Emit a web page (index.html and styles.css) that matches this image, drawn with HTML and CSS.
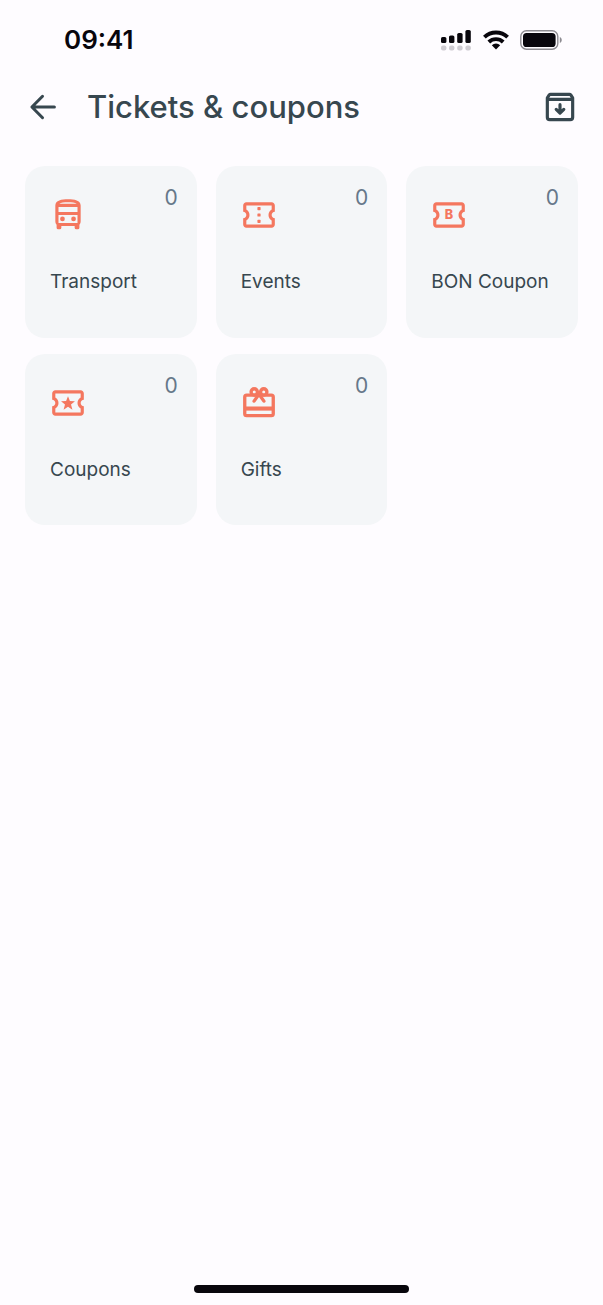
FILE: index.html
```html
<!DOCTYPE html>
<html lang="en">
<head>
<meta charset="utf-8">
<meta name="viewport" content="width=device-width, initial-scale=1">
<title>Tickets &amp; coupons</title>
<link rel="stylesheet" href="styles.css">
</head>
<body>
<svg class="defs" aria-hidden="true">
  <symbol id="ticket" viewBox="0 0 24 24"><path fill="currentColor" d="M22 10V6c0-1.11-.9-2-2-2H4c-1.1 0-1.99.89-1.99 2v4c1.1 0 1.99.9 1.99 2s-.89 2-2 2v4c0 1.1.9 2 2 2h16c1.1 0 2-.9 2-2v-4c-1.1 0-2-.9-2-2s.9-2 2-2zm-2-1.46c-1.19.69-2 1.99-2 3.46s.81 2.77 2 3.46V18H4v-2.54c1.19-.69 2-1.99 2-3.46 0-1.48-.8-2.77-1.99-3.46L4 6h16v2.54z"/></symbol>
</svg>
<div class="screen">
  <div class="status">
    <span class="time">09:41</span>
    <div class="indicators">
      <svg width="32" height="22" viewBox="0 0 32 22" aria-label="Signal">
        <g fill="#08060c"><rect x="1" y="8" width="5.400" height="6" rx="1.600"/><rect x="9" y="6.500" width="5.400" height="7.500" rx="1.600"/><rect x="17.200" y="4" width="5.400" height="10" rx="1.600"/><rect x="25.400" y="1" width="5.400" height="13" rx="1.600"/></g>
        <g fill="#cfccd2"><rect x="1" y="16.400" width="5.400" height="5" rx="2"/><rect x="9" y="16.400" width="5.400" height="5" rx="2"/><rect x="17.200" y="16.400" width="5.400" height="5" rx="2"/><rect x="25.400" y="16.400" width="5.400" height="5" rx="2"/></g>
      </svg>
      <svg width="26" height="20" viewBox="0 0 26 20" aria-label="Wi-Fi">
        <path fill="none" stroke="#08060c" stroke-width="3.900" d="M1.400 7.200a16.600 16.600 0 0 1 23.200 0M5.800 12a10.400 10.400 0 0 1 14.400 0"/>
        <path fill="#08060c" d="M13 19.500l-4.200-4.200a6 6 0 0 1 8.400 0z"/>
      </svg>
      <svg width="42" height="20" viewBox="0 0 42 20" aria-label="Battery">
        <rect x=".8" y=".8" width="37" height="18.400" rx="5.600" fill="none" stroke="#8d8b91" stroke-width="1.400"/>
        <rect x="3" y="3" width="32.600" height="14" rx="3.600" fill="#08060c"/>
        <path d="M39.800 7c2.600 1 2.600 5 0 6z" fill="#8d8b91"/>
      </svg>
    </div>
  </div>
  <header class="bar">
    <button class="icon-button" aria-label="Back">
      <svg width="38" height="38" viewBox="0 0 24 24"><path fill="none" stroke="currentColor" stroke-width="1.900" stroke-linecap="round" stroke-linejoin="round" d="M19.200 12H5.200M11.700 5.200L5 12l6.700 6.800"/></svg>
    </button>
    <h1 class="title">Tickets &amp; coupons</h1>
    <button class="icon-button" aria-label="Archive">
      <svg width="38" height="38" viewBox="0 0 24 24" fill="none" stroke="currentColor" stroke-width="2" stroke-linecap="round" stroke-linejoin="round"><path d="M4 6.200L5.200 4.400Q5.500 4 6 4h12q.5 0 .8.400L20 6.200V18.500a1.500 1.500 0 0 1-1.500 1.500h-13A1.500 1.500 0 0 1 4 18.500zM4.500 7.200h15"/><path d="M12 10.500v5.200M9.600 13.500L12 15.900l2.400-2.400"/></svg>
    </button>
  </header>
  <main class="grid">
    <a class="card" href="#transport">
      <div class="top">
        <svg class="icon" viewBox="0 0 24 24"><path fill="currentColor" fill-rule="evenodd" d="M12 2C8 2 4 2.600 4 6v10c0 .9.300 1.600.8 2.200V20a1 1 0 0 0 1 1h1a1 1 0 0 0 1-1v-1h8.400v1a1 1 0 0 0 1 1h1a1 1 0 0 0 1-1v-1.800c.5-.6.800-1.300.8-2.200V6c0-3.400-4-4-8-4zM6.500 4.900C7.500 4.200 9.500 4 12 4s4.500.2 5.500.9zM6 6.900h12v3.200H6zM6 12h12v5H6z"/><circle cx="8.500" cy="14.500" r="1.500" fill="currentColor"/><circle cx="15.500" cy="14.500" r="1.500" fill="currentColor"/></svg>
        <span class="count">0</span>
      </div>
      <span class="label">Transport</span>
    </a>
    <a class="card" href="#events">
      <div class="top">
        <svg class="icon" viewBox="0 0 24 24"><use href="#ticket"/><g fill="currentColor"><rect x="11" y="7" width="2" height="2" rx=".4"/><rect x="11" y="11" width="2" height="2" rx=".4"/><rect x="11" y="15" width="2" height="2" rx=".4"/></g></svg>
        <span class="count">0</span>
      </div>
      <span class="label">Events</span>
    </a>
    <a class="card" href="#bon">
      <div class="top">
        <svg class="icon" viewBox="0 0 24 24"><use href="#ticket"/><text class="mark" x="12" y="14.700" text-anchor="middle">B</text></svg>
        <span class="count">0</span>
      </div>
      <span class="label">BON Coupon</span>
    </a>
    <a class="card" href="#coupons">
      <div class="top">
        <svg class="icon" viewBox="0 0 24 24"><use href="#ticket"/><path fill="currentColor" d="M12 7.700l1.200 3.100 3.200.1-2.500 2 .9 3.300-2.800-1.900-2.800 1.900.9-3.300-2.500-2 3.200-.1z"/></svg>
        <span class="count">0</span>
      </div>
      <span class="label">Coupons</span>
    </a>
    <a class="card" href="#gifts">
      <div class="top">
        <svg class="icon" viewBox="0 0 24 24" fill="none" stroke="currentColor" stroke-width="2.100" stroke-linejoin="round"><rect x="3" y="7" width="18" height="13" rx="1.200"/><path d="M3 15.500h18" stroke-width="2.600"/><circle cx="9" cy="5" r="2"/><circle cx="15" cy="5" r="2"/><path stroke-linecap="round" d="M12 6.500L8.900 10.800M12 6.500l3.100 4.300"/></svg>
        <span class="count">0</span>
      </div>
      <span class="label">Gifts</span>
    </a>
  </main>
  <div class="home"></div>
</div>
</body>
</html>
```
FILE: styles.css
```css
* {
  box-sizing: border-box;
}

body {
  margin: 0;
  background: #fefcff;
  color: #37474f;
  font-family: Inter, "Liberation Sans", sans-serif;
}

.defs {
  position: absolute;
  width: 0;
  height: 0;
}

.screen {
  display: flex;
  flex-direction: column;
  min-height: 100vh;
}

.status {
  display: flex;
  align-items: center;
  justify-content: space-between;
  height: 80px;
  padding: 0 41px 0 64px;
}

.time {
  color: #08060c;
  font-size: 26px;
  font-weight: 600;
  line-height: 32px;
}

.indicators {
  display: flex;
  align-items: center;
  gap: 11px;
}

.indicators svg {
  display: block;
}

.bar {
  display: flex;
  align-items: center;
  height: 54px;
  padding: 0 24px;
}

.icon-button {
  display: flex;
  padding: 0;
  border: 0;
  background: none;
  color: inherit;
}

.title {
  flex: 1;
  margin: 0 0 0 25px;
  font-size: 31px;
  font-weight: 500;
  line-height: 40px;
}

.grid {
  display: grid;
  grid-template-columns: repeat(3, 1fr);
  gap: 16px 19px;
  padding: 32px 25px 0;
}

.card {
  display: flex;
  flex-direction: column;
  gap: 35px;
  aspect-ratio: 1;
  padding: 18px 19px 18px 25px;
  border-radius: 20px;
  background: #f4f6f8;
  color: inherit;
  text-decoration: none;
}

.top {
  display: flex;
  justify-content: space-between;
  align-items: flex-start;
}

.icon {
  width: 38px;
  height: 38px;
  margin-top: 12px;
  margin-left: -1px;
  color: #f4775f;
}

.mark {
  fill: currentColor;
  font-size: 8px;
  font-weight: 800;
}

.count {
  color: #66788a;
  font-size: 21px;
  line-height: 28px;
}

.label {
  font-size: 19px;
  font-weight: 400;
  line-height: 26px;
  white-space: nowrap;
}

.home {
  width: 215px;
  height: 8px;
  margin: auto auto 12px;
  border-radius: 4px;
  background: #08060c;
}
```
